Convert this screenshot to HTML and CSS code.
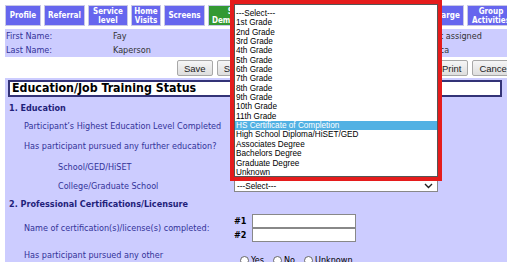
FILE: index.html
```html
<!DOCTYPE html>
<html>
<head>
    <title>Education/Job Training Status</title>
    <link rel="stylesheet" href="styles.css">
</head>
<body>
    <div class="tabs">
        <div class="tab w-profile">Profile</div>
        <div class="tab w-referral">Referral</div>
        <div class="tab w-service">Service<br>level</div>
        <div class="tab w-home">Home<br>Visits</div>
        <div class="tab w-screens">Screens</div>
        <div class="tab green w-wide">Status<br>Demographics</div>
        <div class="tab w-wide">Education</div>
        <div class="tab w-wide">Employment</div>
        <div class="tab w-discharge">Discharge</div>
        <div class="tab w-group">Group<br>Activities</div>
    </div>

    <div class="info">
        <div class="info-label">First Name:</div>
        <div class="info-value">Fay</div>
        <div class="info-label">Case Manager:</div>
        <div class="info-value">Not assigned</div>
        <div class="info-label">Last Name:</div>
        <div class="info-value">Kaperson</div>
        <div class="info-label">Agency:</div>
        <div class="info-value">Erica</div>
    </div>

    <div class="buttons">
        <button class="btn">Save</button>
        <button class="btn">Save &amp; Continue</button>
        <button class="btn">Save &amp; Close</button>
        <button class="btn">Remove</button>
        <button class="btn">Print</button>
        <button class="btn">Cancel</button>
    </div>

    <div class="panel">
        <div class="heading">Education/Job Training Status</div>

        <div class="section-title">1. Education</div>
        <div class="row r-q1">
            <div class="label">Participant’s Highest Education Level Completed</div>
            <div class="field"></div>
        </div>
        <div class="row r-q2">
            <div class="label">Has participant pursued any further education?</div>
            <div class="field"></div>
        </div>
        <div class="row r-sub">
            <div class="label sub">School/GED/HiSET</div>
            <div class="field"></div>
        </div>
        <div class="row r-college">
            <div class="label sub">College/Graduate School</div>
            <div class="field">
                <div class="select-box">
                    <span>---Select---</span>
                    <svg width="9" height="6" viewBox="0 0 9 6"><path d="M1 1 L4.5 4.5 L8 1" fill="none" stroke="#222" stroke-width="1.4"/></svg>
                </div>
            </div>
        </div>

        <div class="section-title s2">2. Professional Certifications/Licensure</div>
        <div class="row r-cert">
            <div class="label">Name of certification(s)/license(s) completed:</div>
            <div class="field cert-fields">
                <div class="cert-line"><b>#1</b><div class="text-input"></div></div>
                <div class="cert-line"><b>#2</b><div class="text-input"></div></div>
            </div>
        </div>
        <div class="row r-other">
            <div class="label">Has participant pursued any other<br>certifications/licensure?</div>
            <div class="field radios">
                <label class="opt"><span class="radio"></span>Yes</label>
                <label class="opt"><span class="radio"></span>No</label>
                <label class="opt"><span class="radio"></span>Unknown</label>
            </div>
        </div>
    </div>

    <!-- open dropdown of the education level select -->
    <div class="dropdown">
        <div class="listbox">
            <div class="option">---Select---</div>
            <div class="option">1st Grade</div>
            <div class="option">2nd Grade</div>
            <div class="option">3rd Grade</div>
            <div class="option">4th Grade</div>
            <div class="option">5th Grade</div>
            <div class="option">6th Grade</div>
            <div class="option">7th Grade</div>
            <div class="option">8th Grade</div>
            <div class="option">9th Grade</div>
            <div class="option">10th Grade</div>
            <div class="option">11th Grade</div>
            <div class="option selected">HS Certificate of Completion</div>
            <div class="option">High School Diploma/HiSET/GED</div>
            <div class="option">Associates Degree</div>
            <div class="option">Bachelors Degree</div>
            <div class="option">Graduate Degree</div>
            <div class="option">Unknown</div>
        </div>
    </div>
</body>
</html>
```

FILE: styles.css
```css
body {
    margin: 0;
    width: 507px;
    height: 262px;
    overflow: hidden;
    position: relative;
    background: #fff;
    font-family: "DejaVu Sans", sans-serif;
    font-stretch: condensed;
    font-size: 9px;
    color: #333399;
}

/* top tab bar */
.tabs {
    display: flex;
    gap: 3px;
    padding: 5px 0 0 5px;
    white-space: nowrap;
}

.tab {
    flex: none;
    height: 21px;
    box-sizing: border-box;
    border: 1px solid #c9c9e6;
    background: #6666ee;
    color: #fff;
    font-size: 8px;
    font-weight: bold;
    line-height: 9px;
    text-align: center;
    display: flex;
    align-items: center;
    justify-content: center;
    overflow: hidden;
}

.tab.green {
    background: #339933;
}

.w-profile { width: 36px; }
.w-referral { width: 41px; }
.w-service { width: 40px; }
.w-home { width: 30px; }
.w-screens { width: 41px; }
.w-wide { width: 66px; }
.w-discharge { width: 49px; }
.w-group { width: 48px; }

/* participant info */
.info {
    margin: 3px 0 0 5px;
    padding-left: 1px;
    height: 28px;
    background: #ccccff;
    display: grid;
    grid-template-columns: 107px 206px 110px auto;
    line-height: 14px;
    white-space: nowrap;
}

.info-value {
    color: #333;
}

/* action buttons */
.buttons {
    display: flex;
    gap: 4px;
    height: 21px;
    box-sizing: border-box;
    padding: 3px 0 0 177px;
    white-space: nowrap;
}

.btn {
    flex: none;
    height: 16px;
    padding: 0 6px;
    border: 1px solid #a8a8a8;
    border-radius: 2px;
    background: linear-gradient(#f6f6f6, #dedede);
    font-family: "Liberation Sans", sans-serif;
    font-size: 9.5px;
    color: #222;
}

/* form panel */
.panel {
    margin-left: 5px;
    padding: 2px 5px 20px 3px;
    background: #ccccff;
}

.heading {
    height: 13px;
    padding-left: 2px;
    border: 2px solid #333377;
    background: #fff;
    color: #000;
    font-size: 12.3px;
    font-weight: bold;
    line-height: 13px;
}

.section-title {
    height: 19px;
    line-height: 22px;
    padding-left: 1px;
    font-weight: bold;
    color: #1f1f7a;
}

.section-title.s2 {
    line-height: 19px;
}

.row {
    display: grid;
    grid-template-columns: 226px 1fr;
    align-items: center;
}

.label {
    padding-left: 16px;
    line-height: 12px;
}

.label.sub {
    padding-left: 50px;
}

.r-q1 { height: 19px; }
.r-q2 { height: 22px; }
.r-sub { height: 20px; }
.r-college { height: 18px; }
.r-cert { height: 28px; }

.r-other {
    align-items: start;
    padding-top: 7px;
}

.select-box {
    width: 204px;
    height: 12px;
    box-sizing: border-box;
    border: 1px solid #888;
    background: #fff;
    padding: 0 4px 0 2px;
    display: flex;
    align-items: center;
    justify-content: space-between;
    font-family: "Liberation Sans", sans-serif;
    font-size: 8.2px;
    color: #000;
}

.cert-fields {
    display: flex;
    flex-direction: column;
}

.cert-line {
    display: flex;
    align-items: center;
    gap: 3px;
    height: 14px;
    color: #000;
    font-size: 9px;
}

.cert-line b {
    width: 15px;
}

.text-input {
    width: 104px;
    height: 14px;
    box-sizing: border-box;
    border: 1px solid #888;
    background: #fff;
}

.radios {
    display: flex;
    align-items: center;
    gap: 9px;
    padding: 6px 0 0 6px;
    color: #000;
}

.opt {
    display: flex;
    align-items: center;
    gap: 2px;
}

.radio {
    width: 7px;
    height: 7px;
    border: 1px solid #666;
    border-radius: 50%;
    background: #fff;
}

/* the open list of the education level select */
.dropdown {
    position: absolute;
    left: 230px;
    top: 0;
    width: 212px;
    height: 181px;
    box-sizing: border-box;
    border: 4px solid #e51c1c;
    background: #fff;
}

.listbox {
    height: 100%;
    box-sizing: border-box;
    border: 1px solid #555;
    padding-top: 4px;
    font-family: "Liberation Sans", sans-serif;
    font-size: 8.2px;
    color: #000;
}

.option {
    height: 9.35px;
    line-height: 9.35px;
    padding-left: 1px;
    white-space: nowrap;
}

.option.selected {
    background: #52b1e3;
    color: #fff;
}
```
